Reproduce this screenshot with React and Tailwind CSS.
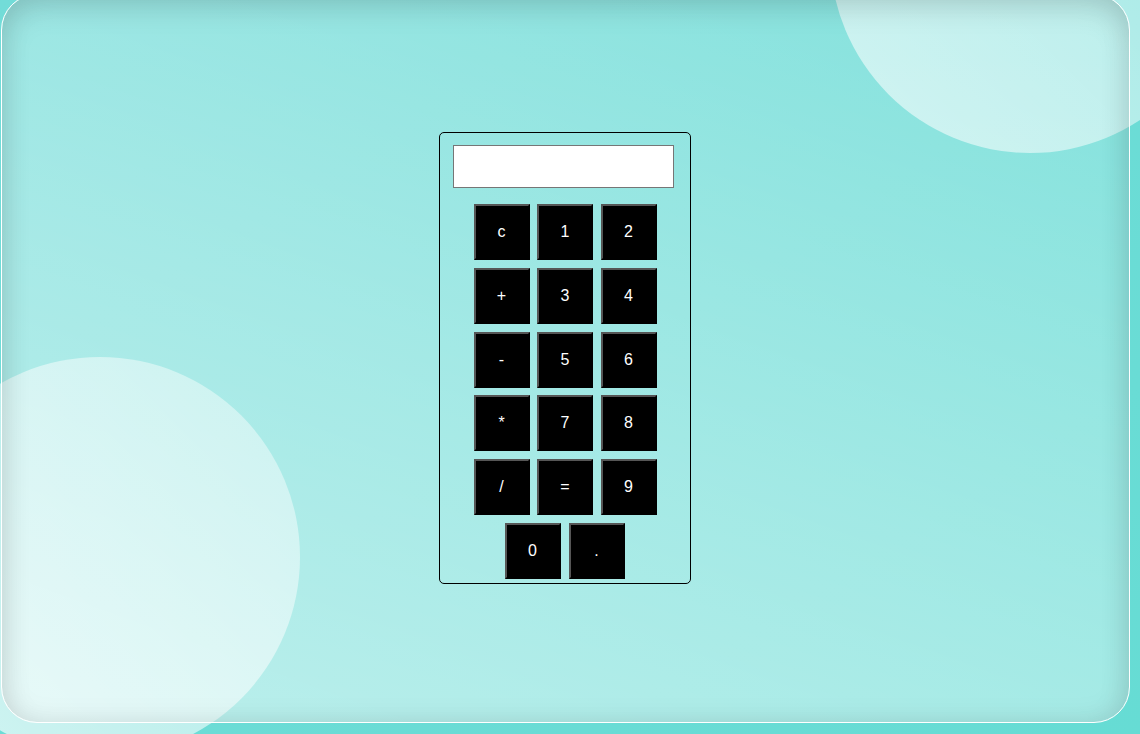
import { useState } from 'react';

const rows = [
    ['c', '1', '2'],
    ['+', '3', '4'],
    ['-', '5', '6'],
    ['*', '7', '8'],
    ['/', '=', '9'],
];

const Tecla = ({ label, onClick }) => (
    <button
        onClick={() => onClick(label)}
        className="w-14 h-14 bg-black text-white text-base border-2 border-t-[#565656] border-l-[#565656] border-r-black border-b-black flex items-center justify-center"
    >
        {label}
    </button>
);

const App = () => {
    const [valor, setValor] = useState('');

    const handleClick = label => {
        if (label === 'c') return setValor('');
        if (label === '=') {
            try {
                // eslint-disable-next-line no-new-func
                setValor(String(Function(`return (${valor})`)()));
            } catch (err) {
                setValor('Error');
            }
            return;
        }
        setValor(prev => prev + label);
    };

    return (
        <div
            className="relative h-[734px] w-[1140px] overflow-hidden bg-gradient-to-br from-[#72dcd8] to-[#66dcd4]"
            style={{ fontFamily: '"Liberation Sans", Arial, sans-serif' }}
        >
            <div className="absolute left-[830px] top-[-247px] h-[400px] w-[400px] rounded-full bg-gradient-to-tr from-white/60 to-white/35" />
            <div className="absolute left-[-100px] top-[357px] h-[400px] w-[400px] rounded-full bg-gradient-to-tr from-white/70 to-white/40" />

            <div className="relative ml-[1px] mt-[-6px] h-[729px] w-[1129px] rounded-[36px] border border-white bg-[linear-gradient(20deg,rgba(255,255,255,0.55)_0%,rgba(255,255,255,0.38)_45%,rgba(255,255,255,0.15)_100%)] shadow-[inset_0_12px_30px_rgba(0,0,0,0.12),inset_0_0_30px_rgba(0,0,0,0.08)] flex items-center justify-center">
                <div className="w-[252px] h-[452px] border border-black rounded-[5px] pt-3 pl-[13px] ml-[-2px] mt-[-1px]">
                    <input
                        type="text"
                        value={valor}
                        readOnly
                        className="block w-[221px] h-[43px] bg-white border border-[#767676] px-2 text-base text-black outline-none"
                    />
                    <div className="mt-4 flex flex-col items-center gap-[7.8px] pr-[13px]">
                        <div className="grid grid-cols-3 gap-x-[7.5px] gap-y-[7.8px] ml-[1px]">
                            {rows.flat().map(l => (
                                <Tecla key={l} label={l} onClick={handleClick} />
                            ))}
                        </div>
                        <div className="flex gap-2">
                            <Tecla label="0" onClick={handleClick} />
                            <Tecla label="." onClick={handleClick} />
                        </div>
                    </div>
                </div>
            </div>
        </div>
    );
};

export default App;
